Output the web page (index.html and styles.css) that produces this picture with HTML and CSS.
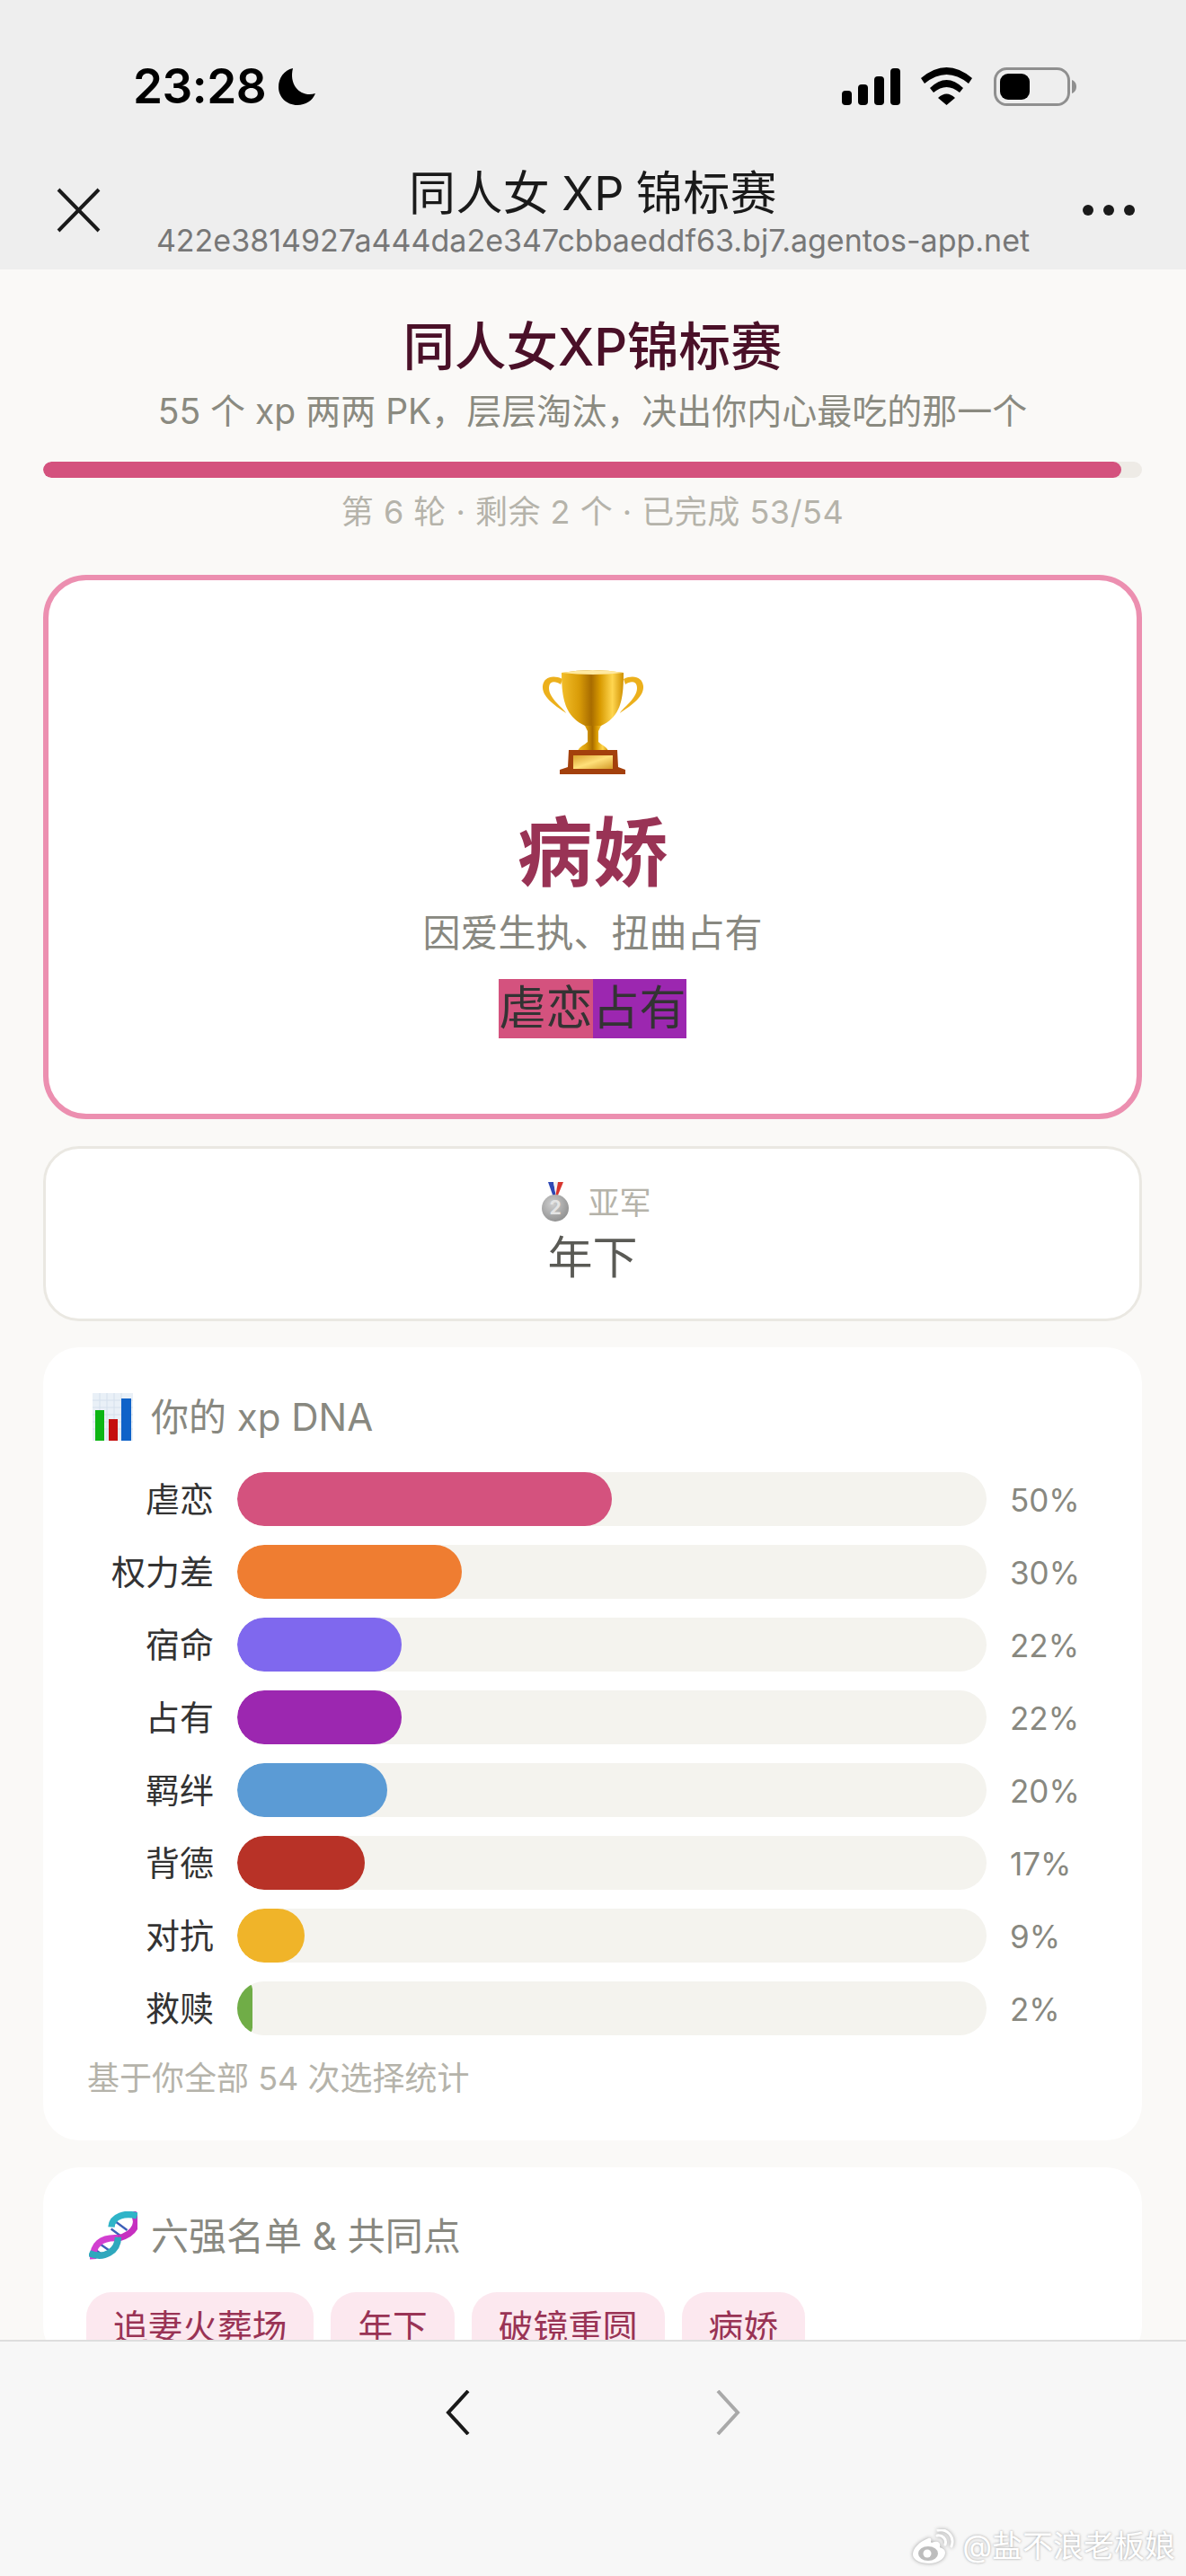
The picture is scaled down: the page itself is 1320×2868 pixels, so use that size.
FILE: index.html
```html
<!DOCTYPE html>
<html lang="zh-CN">
<head>
  <meta charset="utf-8">
  <title>同人女XP锦标赛</title>
  <link rel="stylesheet" href="styles.css">
</head>
<body>
  <div class="phone">
    <header class="top">
      <div class="status">
        <div class="status-left">
          <span class="time">23:28</span>
          <svg class="moon" viewBox="0 0 41 41"><path d="M16 0C6 2 0 11 0 21C0 32 9 41 21 41C30 41 38 36 41 28C26 33 11 20 16 0Z"/></svg>
        </div>
        <div class="status-right">
          <svg class="signal" viewBox="0 0 65 41">
            <rect x="0" y="25" width="11" height="16" rx="4"/>
            <rect x="18" y="18" width="11" height="23" rx="4"/>
            <rect x="36" y="9" width="11" height="32" rx="4"/>
            <rect x="54" y="0" width="11" height="41" rx="4"/>
          </svg>
          <svg class="wifi" viewBox="0 0 57 42">
            <path d="M0 12Q28.5 -12 57 12L53 18Q28.5 -2 4 18Z"/>
            <path d="M10 23Q28.5 5 47 23L43 28Q28.5 16 14 28Z"/>
            <path d="M19 34Q28.5 25 38 34L28.5 42Z"/>
          </svg>
          <svg class="battery" viewBox="0 0 92 43">
            <rect x="1.5" y="1.5" width="82" height="40" rx="13" fill="none" stroke="#8f8f8f" stroke-width="3"/>
            <rect x="7" y="7" width="33" height="29" rx="9"/>
            <path d="M87 14C90 15 92 18 92 21.500C92 25 90 28 87 29Z" fill="#8f8f8f"/>
          </svg>
        </div>
      </div>
      <div class="nav">
        <svg class="close" viewBox="0 0 49 50"><path d="M2 2L47 48M47 2L2 48" fill="none" stroke="#1a1a1a" stroke-width="4"/></svg>
        <div class="nav-title">
          <div class="nav-name">同人女 XP 锦标赛</div>
          <div class="nav-url">422e3814927a444da2e347cbbaeddf63.bj7.agentos-app.net</div>
        </div>
        <div class="dots"><i></i><i></i><i></i></div>
      </div>
    </header>

    <main class="page">
      <h1 class="page-title">同人女XP锦标赛</h1>
      <p class="page-sub">55 个 xp 两两 PK，层层淘汰，决出你内心最吃的那一个</p>
      <div class="progress"><div class="progress-fill" style="width:98.15%"></div></div>
      <p class="progress-text">第 6 轮 · 剩余 2 个 · 已完成 53/54</p>

      <section class="winner">
        <svg class="trophy" viewBox="0 0 114 118">
          <defs>
            <linearGradient id="gold" x1="0" x2="1" y1="0" y2="0">
              <stop offset="0" stop-color="#f2bd2a"/>
              <stop offset=".28" stop-color="#d99c08"/>
              <stop offset=".48" stop-color="#a86c00"/>
              <stop offset=".62" stop-color="#d89a00"/>
              <stop offset=".82" stop-color="#ffd650"/>
              <stop offset="1" stop-color="#cf9000"/>
            </linearGradient>
            <linearGradient id="plate" x1="0" x2="1" y1="0" y2="1">
              <stop offset="0" stop-color="#d9a02c"/>
              <stop offset=".5" stop-color="#ffe07a"/>
              <stop offset="1" stop-color="#d39a28"/>
            </linearGradient>
          </defs>
          <path d="M23 12C12 7 2 10 1 20C0 33 17 43 27 50C24 44 8 34 8 22C8 14 15 14 21 18Z" fill="#ecb01c"/>
          <path d="M91 12C102 7 112 10 113 20C114 33 97 43 87 50C90 44 106 34 106 22C106 14 99 14 93 18Z" fill="#ecb01c"/>
          <path d="M22 5Q57 -1 91 5C91 34 88 54 66 64H48C26 54 22 34 22 5Z" fill="url(#gold)"/>
          <path d="M22 5Q57 -1 91 5Q57 9 22 5Z" fill="#ffe9a0"/>
          <path d="M48 64H66L63 70V82C66 85 72 87 74 92H40C42 87 48 85 51 82V70Z" fill="url(#gold)"/>
          <path d="M30 91H84L85 110L93 113V118H20V113L29 110Z" fill="#a3400c"/>
          <rect x="35" y="97" width="44" height="15" fill="url(#plate)"/>
        </svg>
        <div class="winner-name">病娇</div>
        <div class="winner-desc">因爱生执、扭曲占有</div>
        <div class="winner-tags"><span class="tag-nue">虐恋</span><span class="tag-zhan">占有</span></div>
      </section>

      <section class="runner">
        <div class="runner-head">
          <svg class="medal" viewBox="0 0 30 44">
            <defs>
              <radialGradient id="silver" cx=".4" cy=".35" r=".8">
                <stop offset="0" stop-color="#cfcfcf"/>
                <stop offset="1" stop-color="#858585"/>
              </radialGradient>
            </defs>
            <path d="M7 0H13L16 17H13Z" fill="#2f49b5"/>
            <path d="M13 0H18L16 17Z" fill="#f2f2f2"/>
            <path d="M18 0H24L17 17H15Z" fill="#d8362f"/>
            <circle cx="15" cy="29" r="15" fill="url(#silver)"/>
            <text x="15" y="36" text-anchor="middle" class="medal-num">2</text>
          </svg>
          <span>亚军</span>
        </div>
        <div class="runner-name">年下</div>
      </section>

      <section class="card dna-card">
        <h2 class="card-title">
          <svg class="icon-chart" viewBox="0 0 45 53">
            <rect width="45" height="53" fill="#e9f0f7"/>
            <path d="M0 8H45M0 16H45M0 24H45M0 32H45M0 40H45M8 0V53M16 0V53M24 0V53M32 0V53" stroke="#d5e0ec" stroke-width="1"/>
            <rect x="3" y="19" width="10" height="34" fill="#0db514"/>
            <rect x="18" y="29" width="10" height="24" fill="#c50f0f"/>
            <rect x="32" y="6" width="11" height="47" fill="#0f62c8"/>
          </svg>
          <span class="card-title-text">你的 xp DNA</span>
        </h2>
        <div class="bars">
          <div class="bar-row"><span class="bar-label">虐恋</span><div class="bar-track"><div class="bar-fill c-nue" style="width:50%"></div></div><span class="bar-pct">50%</span></div>
          <div class="bar-row"><span class="bar-label">权力差</span><div class="bar-track"><div class="bar-fill c-quan" style="width:30%"></div></div><span class="bar-pct">30%</span></div>
          <div class="bar-row"><span class="bar-label">宿命</span><div class="bar-track"><div class="bar-fill c-su" style="width:22%"></div></div><span class="bar-pct">22%</span></div>
          <div class="bar-row"><span class="bar-label">占有</span><div class="bar-track"><div class="bar-fill c-zhan" style="width:22%"></div></div><span class="bar-pct">22%</span></div>
          <div class="bar-row"><span class="bar-label">羁绊</span><div class="bar-track"><div class="bar-fill c-ji" style="width:20%"></div></div><span class="bar-pct">20%</span></div>
          <div class="bar-row"><span class="bar-label">背德</span><div class="bar-track"><div class="bar-fill c-bei" style="width:17%"></div></div><span class="bar-pct">17%</span></div>
          <div class="bar-row"><span class="bar-label">对抗</span><div class="bar-track"><div class="bar-fill c-dui" style="width:9%"></div></div><span class="bar-pct">9%</span></div>
          <div class="bar-row"><span class="bar-label">救赎</span><div class="bar-track"><div class="bar-fill c-jiu" style="width:2%"></div></div><span class="bar-pct">2%</span></div>
        </div>
        <p class="note">基于你全部 54 次选择统计</p>
      </section>

      <section class="card six-card">
        <h2 class="card-title">
          <svg class="icon-dna" viewBox="0 0 158 160">
            <g fill="none" stroke-width="22">
              <path d="M88 35L125 62M72 58L105 82M36 108L70 132M22 128L50 148" stroke="#3c5fb8" stroke-width="7"/>
              <path d="M143 3C165 30 160 72 93 90" stroke="#c62fc0"/>
              <path d="M93 88C40 85 10 110 13 158" stroke="#d23fd0"/>
              <path d="M158 15C120 3 75 15 73 52" stroke="#2fb4c8"/>
              <path d="M0 138C50 160 95 130 95 85" stroke="#2fa8bd"/>
            </g>
          </svg>
          <span class="card-title-text">六强名单 &amp; 共同点</span>
        </h2>
        <div class="chips">
          <span class="chip">追妻火葬场</span>
          <span class="chip">年下</span>
          <span class="chip">破镜重圆</span>
          <span class="chip">病娇</span>
        </div>
      </section>
    </main>

    <footer class="bottom">
      <svg class="chev" viewBox="0 0 27 50"><path d="M25 1L3 25L25 49" fill="none" stroke="#1a1a1a" stroke-width="4"/></svg>
      <svg class="chev" viewBox="0 0 27 50"><path d="M2 1L24 25L2 49" fill="none" stroke="#a9a9a9" stroke-width="4"/></svg>
    </footer>

    <div class="mark">
      <svg class="mark-logo" viewBox="0 0 48 38">
        <path d="M18 10C8 14 1 21 1 28C1 34 9 38 19 38C30 38 37 32 37 26C37 22 33 21 31 20C32 16 30 13 25 14C22 15 21 15 21 14C22 11 21 9 18 10Z" fill="#fff"/>
        <ellipse cx="18" cy="27" rx="11" ry="8" fill="#bdbdbd"/>
        <circle cx="17" cy="27" r="4.500" fill="#fff"/>
        <path d="M28 7C34 6 39 11 37 17M29 1C39 -1 48 8 44 19" fill="none" stroke="#fff" stroke-width="3" stroke-linecap="round"/>
      </svg>
      <span>@盐不浪老板娘</span>
    </div>
  </div>
</body>
</html>
```

FILE: styles.css
```css
* { box-sizing: border-box; }
html, body { margin: 0; padding: 0; }
body {
  background: #faf9f7;
  font-family: Inter, "Noto Sans CJK SC", sans-serif;
  color: #333;
}
h1, h2, p { margin: 0; font-weight: 400; }

.phone {
  position: relative;
  width: 1320px;
  height: 2868px;
  display: flex;
  flex-direction: column;
  overflow: hidden;
}

/* top bar */
.top {
  height: 300px;
  flex: none;
  background: #eeeeee;
}
.status {
  height: 186px;
  padding: 75px 122px 0 148px;
  display: flex;
  justify-content: space-between;
  align-items: flex-start;
}
.status-left { display: flex; align-items: center; gap: 14px; height: 43px; }
.time { font-size: 53px; font-weight: 600; line-height: 43px; color: #000; letter-spacing: -0.5px; }
.moon { width: 41px; height: 41px; }
.status-right { display: flex; align-items: flex-start; }
.signal { width: 65px; height: 41px; margin: 1px 23px 0 0; }
.wifi { width: 57px; height: 42px; margin-right: 24px; }
.battery { width: 92px; height: 43px; }

.nav {
  display: grid;
  grid-template-columns: 1fr auto 1fr;
  padding: 0 57px;
}
.close { width: 49px; height: 50px; margin: 23px 0 0 6px; }
.nav-title { text-align: center; }
.nav-name { font-size: 52px; line-height: 60px; color: #1a1a1a; word-spacing: -2px; letter-spacing: 0.4px; }
.nav-url { font-size: 34px; line-height: 38px; margin-top: 3px; color: #777; }
.dots { display: flex; gap: 11px; justify-content: flex-end; margin-top: 42px; }
.dots i { width: 12px; height: 12px; border-radius: 50%; background: #1a1a1a; }

/* page */
.page {
  flex: 1;
  min-height: 0;
  overflow: hidden;
  padding: 50px 49px 0 48px;
}
.page-title {
  text-align: center;
  font-size: 57.500px;
  line-height: 72px;
  font-weight: 500;
  color: #4a1028;
}
.page-sub {
  text-align: center;
  font-size: 39px;
  line-height: 52px;
  margin-top: 10px;
  color: #8a8a80;
}
.progress {
  height: 18px;
  margin-top: 30px;
  border-radius: 9px;
  background: #eeebe6;
  overflow: hidden;
}
.progress-fill { height: 100%; border-radius: 9px; background: #d4527e; }
.progress-text {
  text-align: center;
  font-size: 36px;
  line-height: 46px;
  margin-top: 15px;
  letter-spacing: 0.5px;
  color: #b5b3aa;
}

.winner {
  height: 606px;
  margin-top: 47px;
  padding-top: 98px;
  border: 6px solid #ec8fb0;
  border-radius: 48px;
  background: #fff;
  display: flex;
  flex-direction: column;
  align-items: center;
}
.trophy { width: 114px; height: 118px; }
.winner-name { font-size: 84px; line-height: 100px; margin-top: 38px; font-weight: 700; color: #993355; }
.winner-desc { font-size: 42px; line-height: 56px; margin-top: 11px; color: #888880; }
.winner-tags { display: flex; margin-top: 23px; font-size: 52px; line-height: 66px; color: #333; }
.tag-nue { background: #d4527e; }
.tag-zhan { background: #9c27b0; }

.runner {
  height: 195px;
  margin-top: 30px;
  padding-top: 37px;
  border: 3px solid #eae8e2;
  border-radius: 40px;
  background: #fff;
  display: flex;
  flex-direction: column;
  align-items: center;
}
.runner-head { display: flex; align-items: center; gap: 21px; height: 44px; margin-left: 9px; font-size: 35px; color: #b5b3aa; }
.runner-head span { margin-bottom: 3px; }
.medal { width: 30px; height: 44px; }
.medal-num { font-size: 21px; font-weight: 700; fill: #e4e4e4; }
.runner-name { font-size: 50px; line-height: 60px; margin-top: 10px; color: #5a5a55; }

.card { margin-top: 29px; padding: 50px 48px 0 49px; border-radius: 40px; background: #fff; }
.dna-card { height: 883px; }
.card-title { display: flex; align-items: center; height: 54px; font-size: 42px; color: #888880; }
.card-title-text { margin-bottom: 6px; }
.icon-chart { width: 45px; height: 53px; margin: 0 20px 0 6px; }
.bars { display: flex; flex-direction: column; gap: 21px; margin-top: 35px; }
.bar-row { display: flex; align-items: center; gap: 26px; height: 60px; }
.bar-label { width: 141px; text-align: right; font-size: 38px; margin-bottom: 5px; color: #333; }
.bar-track { width: 834px; height: 60px; border-radius: 30px; background: #f4f3ee; overflow: hidden; }
.bar-fill { height: 100%; border-radius: 30px; }
.bar-pct { font-size: 35px; margin-top: 2px; color: #888880; }
.c-nue { background: #d4527e; }
.c-quan { background: #ef7d31; }
.c-su { background: #7f68ee; }
.c-zhan { background: #9c27b0; }
.c-ji { background: #5b9bd5; }
.c-bei { background: #b83227; }
.c-dui { background: #f0b429; }
.c-jiu { background: #70ad47; }
.note { font-size: 36px; line-height: 48px; margin-top: 24px; color: #b5b3aa; }

.six-card { margin-top: 30px; padding-top: 49px; padding-left: 48px; }
.icon-dna { width: 54px; height: 54px; margin: 0 15px 0 3px; }
.chips { display: flex; gap: 19px; margin-top: 36px; }
.chip {
  padding: 0 30px;
  height: 78px;
  line-height: 78px;
  border-radius: 28px;
  font-size: 38.700px;
  color: #993355;
  background: #fce8ef;
}

/* bottom bar */
.bottom {
  height: 263px;
  flex: none;
  padding-top: 54px;
  border-top: 2px solid #dedede;
  background: #f7f7f7;
  display: flex;
  justify-content: center;
  align-items: flex-start;
  gap: 274px;
}
.chev { width: 27px; height: 50px; }

.mark {
  position: absolute;
  right: 12px;
  bottom: 14px;
  display: flex;
  align-items: center;
  gap: 8px;
  font-size: 34px;
  line-height: 38px;
  color: #fff;
  text-shadow: 0 0 3px #9a9a9a;
}
.mark-logo { width: 48px; height: 38px; filter: drop-shadow(0 0 2px #9a9a9a); }
```
